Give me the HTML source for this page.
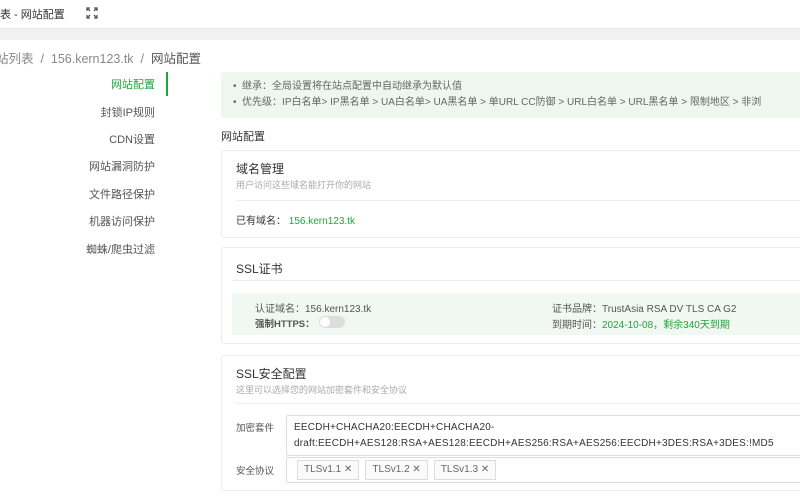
<!DOCTYPE html>
<html><head><meta charset="utf-8"><style>
*{box-sizing:border-box;margin:0;padding:0}
body{width:800px;height:500px;overflow:hidden;background:#fff;font-family:"Liberation Sans","Noto Sans CJK SC",sans-serif;color:#333;position:relative;font-size:12px}
.a{position:absolute;white-space:nowrap}
.card{position:absolute;left:221px;width:600px;border:1px solid #ececec;border-radius:3px;background:#fff}
.nav{position:absolute;right:645px;font-size:11px;color:#555}
.tag{display:inline-block;border:1px solid #ddd;height:20px;line-height:18px;padding:0 6px;font-size:10px;color:#666;margin-right:6px;background:#fafafa}
</style></head><body>
<div class="a" style="left:0;top:6px;font-size:11px;color:#333">表 - 网站配置</div>
<svg class="a" style="left:86px;top:7px" width="12" height="12" viewBox="0 0 12 12" fill="none" stroke="#555" stroke-width="1.3"><path d="M1 4V1h3M8 1h3v3M11 8v3H8M4 11H1V8M1 1l3 3M11 1L8 4M11 11L8 8M1 11l3-3"/></svg>
<div class="a" style="left:0;top:28px;width:800px;height:12px;background:#f2f2f2;border-top:1px solid #e6e6e6"></div>
<div class="a" style="left:-4px;top:48px;font-size:12.5px;color:#888">站列表 &nbsp;/&nbsp; 156.kern123.tk &nbsp;/&nbsp; <span style="color:#555">网站配置</span></div>
<div class="nav" style="top:76px;color:#20a53a">网站配置</div>
<div class="a" style="left:166px;top:72px;width:2px;height:24px;background:#20a53a"></div>
<div class="nav" style="top:104px">封锁IP规则</div>
<div class="nav" style="top:131px">CDN设置</div>
<div class="nav" style="top:158px">网站漏洞防护</div>
<div class="nav" style="top:186px">文件路径保护</div>
<div class="nav" style="top:213px">机器访问保护</div>
<div class="nav" style="top:241px">蜘蛛/爬虫过滤</div>
<div class="a" style="left:221px;top:72px;width:600px;height:46px;background:#eef6ef;border-radius:3px;font-size:10px;color:#666;padding:7px 0 0 12px;line-height:16px">• &nbsp;继承：全局设置将在站点配置中自动继承为默认值<br>• &nbsp;优先级：IP白名单&gt; IP黑名单 &gt; UA白名单&gt; UA黑名单 &gt; 单URL CC防御 &gt; URL白名单 &gt; URL黑名单 &gt; 限制地区 &gt; 非浏</div>
<div class="a" style="left:221px;top:128px;font-size:11px;color:#333">网站配置</div>
<div class="card" style="top:150px;height:88px">
<div class="a" style="left:14px;top:9px;font-size:12px">域名管理</div>
<div class="a" style="left:14px;top:27px;font-size:9px;color:#aaa">用户访问这些域名能打开你的网站</div>
<div class="a" style="left:14px;top:49px;width:580px;border-top:1px solid #eee"></div>
<div class="a" style="left:14px;top:61px;font-size:10px">已有域名： <span style="color:#20a53a">156.kern123.tk</span></div>
</div>
<div class="card" style="top:247px;height:97px">
<div class="a" style="left:14px;top:12px;font-size:12px">SSL证书</div>
<div class="a" style="left:10px;top:32px;width:580px;border-top:1px solid #eee"></div>
<div class="a" style="left:10px;top:45px;width:580px;height:42px;background:#f1f8f1"></div>
<div class="a" style="left:33px;top:52px;font-size:10px;color:#555">认证域名：156.kern123.tk</div>
<div class="a" style="left:33px;top:68px;font-size:9.5px;color:#555;font-weight:bold">强制HTTPS：</div>
<div class="a" style="left:97px;top:68px;width:26px;height:12px;border-radius:6px;background:#ddd"><div style="position:absolute;left:1px;top:1px;width:10px;height:10px;border-radius:50%;background:#fff"></div></div>
<div class="a" style="left:330px;top:52px;font-size:10px;color:#555">证书品牌：TrustAsia RSA DV TLS CA G2</div>
<div class="a" style="left:330px;top:68px;font-size:10px;color:#555">到期时间：<span style="color:#20a53a">2024-10-08，剩余340天到期</span></div>
</div>
<div class="card" style="top:355px;height:136px">
<div class="a" style="left:14px;top:9px;font-size:12px">SSL安全配置</div>
<div class="a" style="left:14px;top:27px;font-size:9px;color:#aaa">这里可以选择您的网站加密套件和安全协议</div>
<div class="a" style="left:14px;top:47px;width:580px;border-top:1px solid #eee"></div>
<div class="a" style="left:14px;top:64px;font-size:9.5px;color:#555">加密套件</div>
<div class="a" style="left:64px;top:59px;width:540px;height:41px;border:1px solid #ddd;border-radius:2px;font-size:10px;line-height:16px;padding:4px 0 0 7px;color:#333;letter-spacing:0.2px">EECDH+CHACHA20:EECDH+CHACHA20-<br>draft:EECDH+AES128:RSA+AES128:EECDH+AES256:RSA+AES256:EECDH+3DES:RSA+3DES:!MD5</div>
<div class="a" style="left:14px;top:107px;font-size:9.5px;color:#555">安全协议</div>
<div class="a" style="left:64px;top:101px;width:540px;height:26px;border:1px solid #ddd;border-radius:2px;padding:2px 0 0 10px">
<span class="tag">TLSv1.1 ✕</span><span class="tag">TLSv1.2 ✕</span><span class="tag">TLSv1.3 ✕</span></div>
</div>
</body></html>
